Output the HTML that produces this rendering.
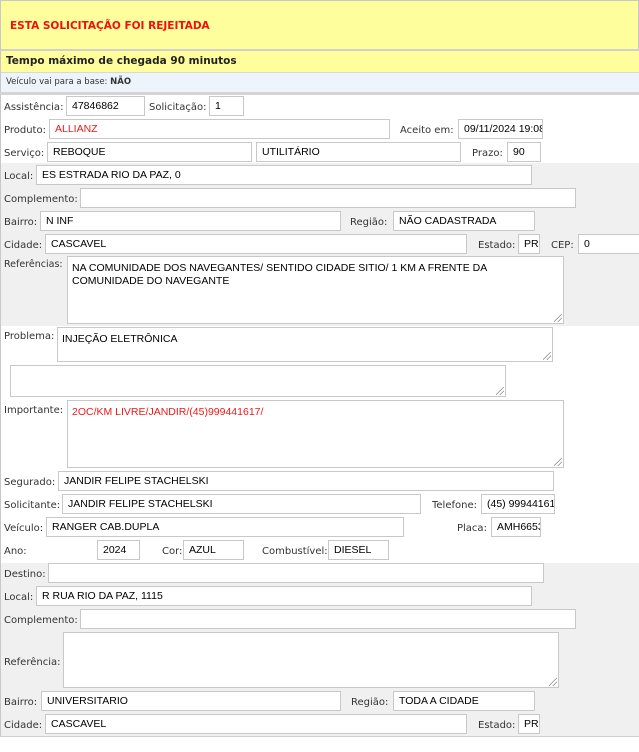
<!DOCTYPE html>
<html><head><meta charset="utf-8"><style>
*{margin:0;padding:0;box-sizing:border-box}
body{width:639px;height:752px;background:#fff;position:relative;overflow:hidden;font-family:"DejaVu Sans","Liberation Sans",sans-serif}
.a{position:absolute}
.l{position:absolute;font-size:10px;color:#333;white-space:nowrap;line-height:12px;margin-top:2px}
.i{position:absolute;border:1px solid #c8c8c8;background:#fff;height:20px;font:10.5px "Liberation Sans",sans-serif;color:#000;padding:3px 0 0 5px;white-space:nowrap;overflow:hidden;line-height:13px}
.t{position:absolute;border:1px solid #c8c8c8;background:#fff;font:10.5px "Liberation Sans",sans-serif;color:#000;padding:5px 0 0 4px;line-height:13px}
.t:after{content:"";position:absolute;right:1px;bottom:1px;width:8px;height:8px;background:linear-gradient(135deg,transparent 45%,#888 45%,#888 52%,transparent 52%,transparent 70%,#888 70%,#888 77%,transparent 77%)}
.red{color:#f01818}
</style></head><body>
<div class="a" style="left:0;top:0;width:639px;height:51px;background:#fffe9c;border:1px solid #c8c8c8;border-bottom:2px solid #d0d0d0"></div>
<div class="a" style="left:10px;top:20px;font-size:10.5px;font-weight:bold;color:#f01010">ESTA SOLICITAÇÃO FOI REJEITADA</div>
<div class="a" style="left:0;top:51px;width:639px;height:21px;background:#fffe9c;border-left:1px solid #c8c8c8"></div>
<div class="a" style="left:6px;top:55px;font-size:10.5px;font-weight:bold;color:#222">Tempo máximo de chegada 90 minutos</div>
<div class="a" style="left:0;top:72px;width:639px;height:20px;background:#edf4fc;border-top:1px solid #d8d8d8;border-left:1px solid #c8c8c8"></div>
<div class="a" style="left:6px;top:77px;font-size:8.5px;color:#333">Veículo vai para a base: <b>NÃO</b></div>
<div class="a" style="left:0;top:92px;width:639px;height:3px;background:#d4d4d4"></div>
<div class="a" style="left:0;top:95px;width:1px;height:642px;background:#c8c8c8"></div>
<div class="a" style="left:1px;top:163px;width:638px;height:163px;background:#f0f0f0"></div>
<div class="a" style="left:1px;top:563px;width:638px;height:173px;background:#f0f0f0"></div>
<div class="a" style="left:0;top:736px;width:639px;height:1px;background:#d0d0d0"></div>

<div class="l" style="left:4px;top:100px">Assistência:</div><div class="i" style="left:66px;top:96px;width:79px">47846862</div>
<div class="l" style="left:149px;top:100px">Solicitação:</div><div class="i" style="left:209px;top:96px;width:35px">1</div>
<div class="l" style="left:4px;top:123px">Produto:</div><div class="i red" style="left:49px;top:119px;width:341px;color:#f01818">ALLIANZ</div>
<div class="l" style="left:400px;top:123px">Aceito em:</div><div class="i" style="left:458px;top:119px;width:85px">09/11/2024 19:08</div>
<div class="l" style="left:4px;top:146px">Serviço:</div><div class="i" style="left:47px;top:142px;width:205px">REBOQUE</div>
<div class="i" style="left:256px;top:142px;width:205px">UTILITÁRIO</div>
<div class="l" style="left:472px;top:146px">Prazo:</div><div class="i" style="left:507px;top:142px;width:34px">90</div>

<div class="l" style="left:4px;top:169px">Local:</div><div class="i" style="left:36px;top:165px;width:496px">ES ESTRADA RIO DA PAZ, 0</div>
<div class="l" style="left:4px;top:192px">Complemento:</div><div class="i" style="left:80px;top:188px;width:496px"></div>
<div class="l" style="left:4px;top:215px">Bairro:</div><div class="i" style="left:40px;top:211px;width:301px">N INF</div>
<div class="l" style="left:350px;top:215px">Região:</div><div class="i" style="left:393px;top:211px;width:142px">NÃO CADASTRADA</div>
<div class="l" style="left:4px;top:238px">Cidade:</div><div class="i" style="left:45px;top:234px;width:422px">CASCAVEL</div>
<div class="l" style="left:478px;top:238px">Estado:</div><div class="i" style="left:518px;top:234px;width:22px">PR</div>
<div class="l" style="left:551px;top:238px">CEP:</div><div class="i" style="left:578px;top:234px;width:70px">0</div>
<div class="l" style="left:4px;top:257px;font-size:9.5px">Referências:</div><div class="t" style="left:67px;top:256px;width:497px;height:68px;padding-right:20px">NA COMUNIDADE DOS NAVEGANTES/ SENTIDO CIDADE SITIO/ 1 KM A FRENTE DA COMUNIDADE DO NAVEGANTE</div>

<div class="l" style="left:4px;top:329px">Problema:</div><div class="t" style="left:57px;top:327px;width:496px;height:35px">INJEÇÃO ELETRÔNICA</div>
<div class="t" style="left:10px;top:365px;width:496px;height:32px"></div>
<div class="l" style="left:4px;top:403px">Importante:</div><div class="t" style="left:67px;top:400px;width:497px;height:68px;color:#f01818">2OC/KM LIVRE/JANDIR/(45)999441617/</div>
<div class="l" style="left:4px;top:475px">Segurado:</div><div class="i" style="left:58px;top:471px;width:496px">JANDIR FELIPE STACHELSKI</div>
<div class="l" style="left:4px;top:498px">Solicitante:</div><div class="i" style="left:62px;top:494px;width:359px">JANDIR FELIPE STACHELSKI</div>
<div class="l" style="left:432px;top:498px">Telefone:</div><div class="i" style="left:481px;top:494px;width:74px">(45) 999441617</div>
<div class="l" style="left:4px;top:521px">Veículo:</div><div class="i" style="left:46px;top:517px;width:358px">RANGER CAB.DUPLA</div>
<div class="l" style="left:457px;top:521px">Placa:</div><div class="i" style="left:491px;top:517px;width:50px">AMH6653</div>
<div class="l" style="left:4px;top:544px">Ano:</div><div class="i" style="left:97px;top:540px;width:43px">2024</div>
<div class="l" style="left:162px;top:544px">Cor:</div><div class="i" style="left:183px;top:540px;width:61px">AZUL</div>
<div class="l" style="left:262px;top:544px">Combustível:</div><div class="i" style="left:328px;top:540px;width:61px">DIESEL</div>

<div class="l" style="left:4px;top:567px">Destino:</div><div class="i" style="left:48px;top:563px;width:496px"></div>
<div class="l" style="left:4px;top:590px">Local:</div><div class="i" style="left:36px;top:586px;width:496px">R RUA RIO DA PAZ, 1115</div>
<div class="l" style="left:4px;top:613px">Complemento:</div><div class="i" style="left:80px;top:609px;width:496px"></div>
<div class="l" style="left:4px;top:655px">Referência:</div><div class="t" style="left:63px;top:632px;width:496px;height:56px"></div>
<div class="l" style="left:4px;top:695px">Bairro:</div><div class="i" style="left:41px;top:691px;width:300px">UNIVERSITARIO</div>
<div class="l" style="left:351px;top:695px">Região:</div><div class="i" style="left:393px;top:691px;width:142px">TODA A CIDADE</div>
<div class="l" style="left:4px;top:718px">Cidade:</div><div class="i" style="left:45px;top:714px;width:422px">CASCAVEL</div>
<div class="l" style="left:478px;top:718px">Estado:</div><div class="i" style="left:518px;top:714px;width:22px">PR</div>
</body></html>
